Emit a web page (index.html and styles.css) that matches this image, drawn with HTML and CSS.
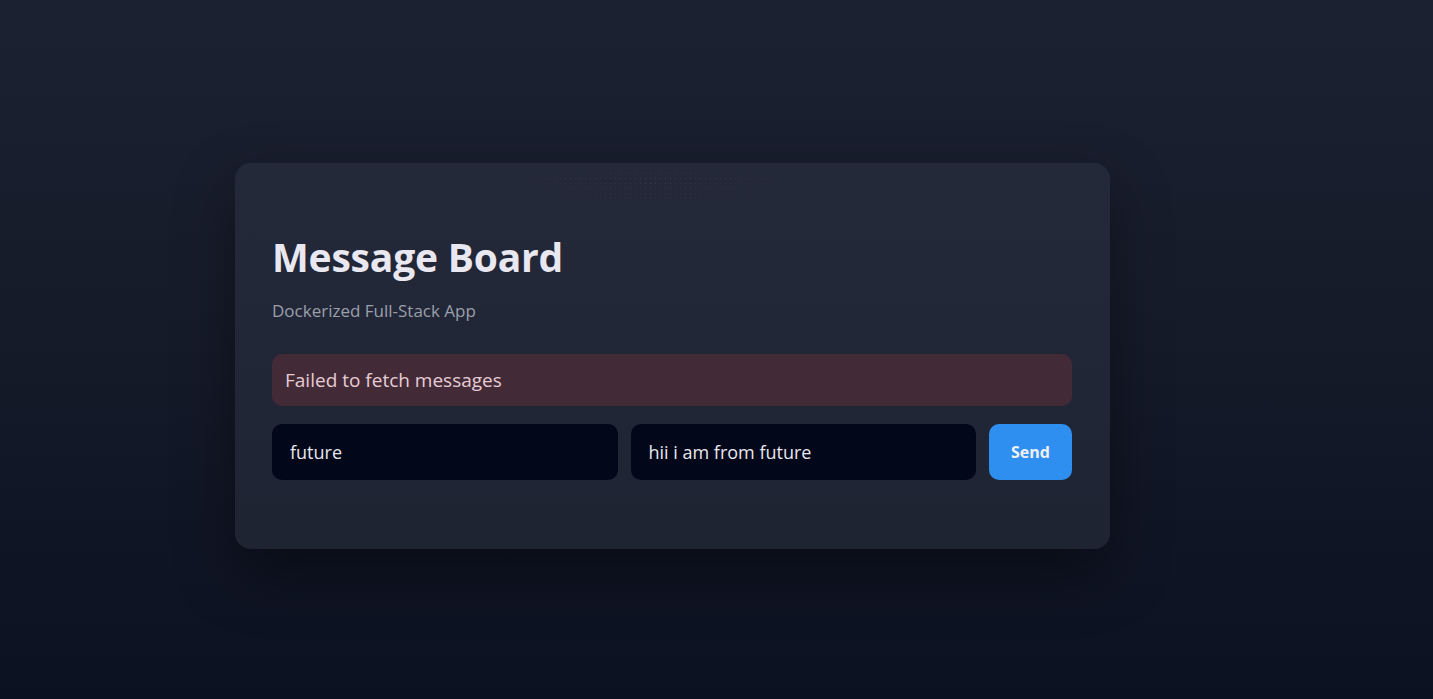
FILE: index.html
```html
<!DOCTYPE html>
<html lang="en">
<head>
    <meta charset="UTF-8">
    <meta name="viewport" content="width=device-width, initial-scale=1.0">
    <title>Message Board</title>
    <link rel="stylesheet" href="styles.css">
</head>
<body>
    <div class="page">
        <div class="card">
            <div class="dots"></div>
            <h1>Message Board</h1>
            <p class="subtitle">Dockerized Full-Stack App</p>

            <div class="error">Failed to fetch messages</div>

            <form class="compose">
                <input class="field" type="text" value="future" placeholder="Name">
                <input class="field" type="text" value="hii i am from future" placeholder="Message">
                <button type="button" class="send-btn">Send</button>
            </form>
        </div>
    </div>
</body>
</html>
```

FILE: styles.css
```css
* {
    box-sizing: border-box;
}
html, body {
    margin: 0;
    height: 100%;
}
body {
    font-family: "Open Sans", "Noto Sans", sans-serif;
    background: linear-gradient(180deg, #1c2131 0%, #171c2b 40%, #0c1121 100%);
    color: #e8e6ee;
    overflow: hidden;
}
.page {
    padding: 163px 0 0 235px;
}
.card {
    position: relative;
    width: 875px;
    height: 386px;
    padding: 69px 38px 0 37px;
    border-radius: 16px;
    background: linear-gradient(180deg, #232939 0%, #1f2433 100%);
    box-shadow: 0 24px 60px rgba(0, 0, 0, 0.4);
}
.dots {
    position: absolute;
    top: 8px;
    left: 50%;
    width: 360px;
    height: 40px;
    margin-left: -200px;
    background-image: radial-gradient(circle, rgba(160, 90, 120, 0.28) 0.6px, transparent 1px);
    background-size: 5px 5px;
    -webkit-mask-image: radial-gradient(ellipse at 50% 30%, #000 0%, transparent 60%);
    mask-image: radial-gradient(ellipse at 50% 30%, #000 0%, transparent 60%);
    pointer-events: none;
}
h1 {
    margin: 0;
    font-size: 39px;
    font-weight: 700;
    line-height: 50px;
    color: #e9e7ef;
    letter-spacing: -0.2px;
}
.subtitle {
    margin: 17px 0 0;
    font-size: 17px;
    color: #9b9fac;
}
.error {
    margin-top: 32px;
    height: 52px;
    padding: 0 13px;
    display: flex;
    align-items: center;
    border-radius: 10px;
    background: #432a37;
    color: #e6cdd5;
    font-size: 19px;
}
.compose {
    display: flex;
    gap: 13px;
    margin-top: 18px;
}
.field {
    flex: 1;
    height: 56px;
    padding: 0 18px;
    border: none;
    border-radius: 10px;
    background: #03071a;
    color: #e8e6ee;
    font-family: inherit;
    font-size: 18px;
    outline: none;
}
.send-btn {
    width: 83px;
    height: 56px;
    border: none;
    border-radius: 10px;
    background: #2f8ff0;
    color: #f0f0f5;
    font-family: inherit;
    font-size: 16px;
    font-weight: 700;
    cursor: pointer;
}
```
